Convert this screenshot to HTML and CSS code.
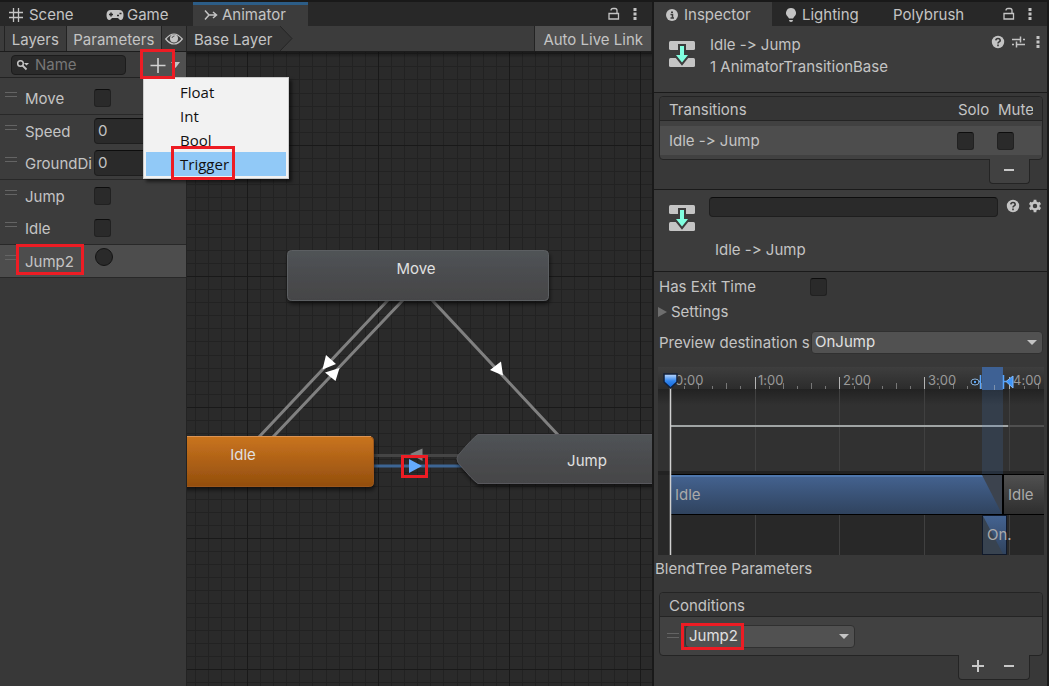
FILE: index.html
```html
<!DOCTYPE html>
<html lang="en">
<head>
<meta charset="utf-8">
<title>Animator</title>
<link rel="stylesheet" href="styles.css">
</head>
<body>
<svg class="defs" aria-hidden="true">
  <symbol id="lock" viewBox="0 0 12 14"><path d="M1 6.5h9.5v5.5H1zM3 3.5q0-2 2-2h2q2 0 2 2v3" fill="none" stroke="#c4c4c4" stroke-width="1.3"/></symbol>
  <symbol id="dots" viewBox="0 0 4 14"><path d="M.5 1h3v3h-3zM.5 5.5h3v3h-3zM.5 10h3v3h-3z" fill="#c4c4c4"/></symbol>
  <symbol id="help" viewBox="0 0 14 14"><circle cx="7" cy="7" r="6.2" fill="#c4c4c4"/><path d="M4.8 5.4q.2-1.9 2.2-1.9t2.2 1.7q0 1.1-1.1 1.7T7 8.6M7 9.6v1.6" fill="none" stroke="#383838" stroke-width="1.6"/></symbol>
  <symbol id="transition" viewBox="0 0 28 28"><rect x="1" y="1" width="26" height="9" rx="1.5" fill="#c4c4c4"/><rect x="1" y="18" width="26" height="9" rx="1.5" fill="#c4c4c4"/><path d="M12 6h4v9h4L14 22.500 8 15h4z" fill="#80ffe0" stroke="#3c3c3c" stroke-width="4" paint-order="stroke"/></symbol>
  <symbol id="grip" viewBox="0 0 12 6"><path d="M0 .5h12M0 4.500h12" stroke="#646464"/></symbol>
</svg>
<div class="editor">
  <section class="animator">
    <nav class="tabs">
      <button class="tab tab-scene"><svg width="14" height="14" viewBox="0 0 14 14"><path d="M4.500 0v14M9.500 0v14M0 4.500h14M0 9.500h14" stroke="#c4c4c4" stroke-width="1.300"/></svg>Scene</button>
      <button class="tab tab-game"><svg width="18" height="12" viewBox="0 0 18 12"><path d="M5 1h8q4.500 0 4.500 5t-3 5q-1 0-2.500-2H6Q4.500 11 3.500 11 .5 11 .5 6T5 1z" fill="#c4c4c4"/><path d="M5 3.500v4M3 5.500h4M11 6.500h2M13.500 4.500h2" stroke="#282828" stroke-width="1.500"/></svg>Game</button>
      <button class="tab tab-animator active"><svg width="14" height="12" viewBox="0 0 14 12"><path d="M1 1.500L5 6h7M1 10.500L5 6M9 3l3.500 3L9 9" fill="none" stroke="#c4c4c4" stroke-width="1.500"/></svg>Animator</button>
      <span class="tab-tools"><svg width="12" height="14"><use href="#lock"/></svg><svg width="4" height="14"><use href="#dots"/></svg></span>
    </nav>
    <div class="toolbar">
      <div class="toolbar-side">
        <button class="tool">Layers</button><button class="tool pressed">Parameters</button>
        <button class="tool eye" aria-label="Hide"><svg width="18" height="12" viewBox="0 0 18 12"><path d="M.7 6Q9-4 17.300 6 9 16 .7 6z" fill="none" stroke="#c4c4c4" stroke-width="1.200"/><circle cx="9" cy="5.500" r="4" fill="#c4c4c4"/><path d="M7 5q.3-2 2.500-2" stroke="#505050" fill="none"/></svg></button>
      </div>
      <div class="crumb"><span>Base Layer</span><svg width="13" height="25" viewBox="0 0 13 25"><path d="M0 0l12 12.500L0 25z" fill="#353535"/><path d="M0 0l12 12.500L0 25" fill="none" stroke="#262626"/></svg></div>
      <button class="tool live">Auto Live Link</button>
    </div>
    <div class="workspace">
      <aside class="parameters">
        <div class="filter">
          <label class="search"><svg width="14" height="12" viewBox="0 0 14 12"><circle cx="4.500" cy="4.500" r="2.800" fill="none" stroke="#c4c4c4" stroke-width="1.500"/><path d="M6.500 6.500l4 4" stroke="#c4c4c4" stroke-width="1.800"/><path d="M8 4h5l-2.500 2.500z" fill="#c4c4c4"/></svg><input type="text" placeholder="Name" aria-label="Name"></label>
          <button class="add" aria-label="Add parameter"><svg width="30" height="16" viewBox="0 0 30 16"><path d="M8 1v15M.5 8.500h15" stroke="#d2d2d2" stroke-width="1.600"/><path d="M21 5h9l-4.500 6z" fill="#c4c4c4"/></svg></button>
          <div class="menu" role="menu">
            <button role="menuitem">Float</button><button role="menuitem">Int</button><button role="menuitem">Bool</button><button role="menuitem" class="hover"><span class="mark mark-trigger"></span>Trigger</button>
          </div>
          <span class="mark mark-add"></span>
        </div>
        <div class="params">
          <div class="param ruled"><svg class="grip"><use href="#grip"/></svg><label for="p1">Move</label><input id="p1" type="checkbox"></div>
          <div class="param"><svg class="grip"><use href="#grip"/></svg><label for="p2">Speed</label><input id="p2" type="text" value="0"></div>
          <div class="param ruled"><svg class="grip"><use href="#grip"/></svg><label for="p3">GroundDi</label><input id="p3" type="text" value="0"></div>
          <div class="param"><svg class="grip"><use href="#grip"/></svg><label for="p4">Jump</label><input id="p4" type="checkbox"></div>
          <div class="param ruled"><svg class="grip"><use href="#grip"/></svg><label for="p5">Idle</label><input id="p5" type="checkbox"></div>
          <div class="param ruled selected"><svg class="grip"><use href="#grip"/></svg><label for="p6">Jump2</label><input id="p6" type="radio"><span class="mark mark-param"></span></div>
        </div>
      </aside>
      <div class="graph">
        <svg class="graph-art" width="100%" height="100%">
          <defs>
            <pattern id="grid" x="60" y="93" width="131" height="131" patternUnits="userSpaceOnUse">
              <path d="M13.500 0v131M26.500 0v131M39.500 0v131M52.500 0v131M65.500 0v131M79.500 0v131M92.500 0v131M105.500 0v131M118.500 0v131M0 13.500h131M0 26.500h131M0 39.500h131M0 52.500h131M0 65.500h131M0 79.500h131M0 92.500h131M0 105.500h131M0 118.500h131" stroke="#222222"/>
              <path d="M.5 0v131M0 .5h131" stroke="#191919"/>
            </pattern>
            <linearGradient id="slate" x2="0" y2="1"><stop stop-color="#505356"/><stop offset="1" stop-color="#454547"/></linearGradient>
            <linearGradient id="orange" x2="0" y2="1"><stop stop-color="#c9741f"/><stop offset="1" stop-color="#934e0d"/></linearGradient>
            <linearGradient id="topshade" x2="0" y2="1"><stop stop-color="#000" stop-opacity=".4"/><stop offset="1" stop-color="#000" stop-opacity="0"/></linearGradient>
            <filter id="drop" x="-10%" y="-20%" width="120%" height="150%"><feDropShadow dx="1" dy="3" stdDeviation="2" flood-opacity=".6"/></filter>
          </defs>
          <rect width="100%" height="100%" fill="url(#grid)"/>
          <rect width="100%" height="6" fill="url(#topshade)"/>
          <g transform="translate(-187 -52)">
            <path d="M388 300L259 437M403 300L273 437M432 300L559 436" stroke="#808080" stroke-width="3"/>
            <path d="M372 455.500h90" stroke="#454545" stroke-width="3"/><path d="M372 466h92" stroke="#3d6593" stroke-width="3"/>
            <path d="M326 355l10 9-13.500 5.500zM325 372.500l14.500-4.500-4 13zM501 361.500l-11 8.500 13 5.500z" fill="#fff"/>
            <path d="M410 454l12.500-5.500V461z" fill="#808080"/><path d="M409 459v14l13-7z" fill="#64aaff"/>
            <g filter="url(#drop)"><rect x="287.500" y="250.500" width="261" height="50" rx="4" fill="url(#slate)" stroke="#5c5f62"/></g>
            <g filter="url(#drop)"><rect x="120.500" y="436.500" width="253" height="50" rx="4" fill="url(#orange)" stroke="#9c571a"/></g><path d="M187 436.500h184" stroke="#db9454"/>
            <g filter="url(#drop)"><path d="M478 434.500h400v49H478q-5-3-20-21-2-4 0-7 15-18 20-21z" fill="url(#slate)" stroke="#58595d"/></g>
            <g class="node-names"><text x="416" y="274">Move</text><text x="243" y="460">Idle</text><text x="587" y="466">Jump</text></g>
          </g>
        </svg>
        <span class="mark mark-arrow"></span>
      </div>
    </div>
  </section>

  <section class="inspector">
    <nav class="tabs">
      <button class="tab tab-inspector current"><svg width="12" height="12" viewBox="0 0 12 12"><circle cx="6" cy="6" r="6" fill="#c4c4c4"/><path d="M4.500 5.500h2v3.500M4.500 9h3.500M5 3.200h2" stroke="#3c3c3c" stroke-width="1.500" fill="none"/></svg>Inspector</button>
      <button class="tab tab-lighting"><svg width="12" height="14" viewBox="0 0 12 14"><path d="M6 0a5 5 0 0 1 3 9l-1 1.500H4L3 9a5 5 0 0 1 3-9zM4 12h4q0 2-2 2t-2-2z" fill="#c4c4c4"/></svg>Lighting</button>
      <button class="tab tab-poly">Polybrush</button>
      <span class="tab-tools"><svg width="12" height="14"><use href="#lock"/></svg><svg width="4" height="14"><use href="#dots"/></svg></span>
    </nav>
    <header class="summary">
      <svg width="28" height="28"><use href="#transition"/></svg>
      <div class="summary-text"><div>Idle -&gt; Jump</div><div>1 AnimatorTransitionBase</div></div>
      <div class="summary-tools"><svg width="14" height="14"><use href="#help"/></svg><svg class="presets" width="14" height="14" viewBox="0 0 14 14"><path d="M1 4.500h8M12 4.500h2M1 9.500h2M6 9.500h8M9.500 1.500v6M5.500 6.500v6" stroke="#c4c4c4" stroke-width="1.500"/></svg><svg width="4" height="14"><use href="#dots"/></svg></div>
    </header>
    <div class="transitions">
      <div class="box">
        <div class="box-head"><span class="grow">Transitions</span><span class="col">Solo</span><span class="col mute">Mute</span></div>
        <div class="box-row"><span class="grow">Idle -&gt; Jump</span><input class="col-check" type="checkbox" aria-label="Solo"><input class="col-check" type="checkbox" aria-label="Mute"></div>
      </div>
      <div class="box-foot"><button aria-label="Remove transition"><svg width="12" height="12"><path d="M1 6h10" stroke="#c8c8c8" stroke-width="2"/></svg></button></div>
    </div>
    <div class="detail">
      <svg width="28" height="28"><use href="#transition"/></svg>
      <div class="detail-main"><input type="text" aria-label="Transition name"><span>Idle -&gt; Jump</span></div>
      <div class="detail-tools"><svg width="14" height="14"><use href="#help"/></svg><svg width="14" height="14" viewBox="0 0 14 14"><circle cx="7" cy="7" r="3.500" fill="none" stroke="#c4c4c4" stroke-width="2.500"/><path d="M7 .8v2.500M7 10.700v2.500M1.600 3.900l2.200 1.200M10.200 8.900l2.200 1.200M1.600 10.100l2.200-1.200M10.200 5.100l2.200-1.200" stroke="#c4c4c4" stroke-width="2.800"/></svg></div>
    </div>
    <div class="settings">
      <div class="field"><label for="exit">Has Exit Time</label><input id="exit" type="checkbox"></div>
      <button class="fold"><svg width="10" height="12"><path d="M0 1v10l9-5z" fill="#6e6e6e"/></svg>Settings</button>
      <div class="field preview"><label for="dest">Preview destination s</label><span class="select"><select id="dest"><option>OnJump</option></select></span></div>
    </div>
    <div class="timeline">
      <svg width="100%" height="188">
        <defs>
          <linearGradient id="ruler" x2="0" y2="1"><stop stop-color="#3e3e3e"/><stop offset="1" stop-color="#2c2c2c"/></linearGradient>
          <linearGradient id="clip" x2="0" y2="1"><stop stop-color="#446391"/><stop offset="1" stop-color="#30435e"/></linearGradient>
          <linearGradient id="clip2" x2="0" y2="1"><stop stop-color="#505050"/><stop offset="1" stop-color="#2e2e2e"/></linearGradient>
          <linearGradient id="thumb" x2="0" y2="1"><stop stop-color="#c3dcff"/><stop offset=".5" stop-color="#3286ee"/><stop offset="1" stop-color="#0d63d8"/></linearGradient>
          <pattern id="ticks" x="12" y="0" width="85" height="22" patternUnits="userSpaceOnUse"><path d="M14.500 19v3M42.500 19v3M70.500 19v3M28.500 16v6M56.500 16v6" stroke="#777"/></pattern>
          <linearGradient id="shade" x2="0" y2="1"><stop stop-color="#222"/><stop offset="1" stop-color="#313131"/></linearGradient>
        </defs>
        <rect width="100%" height="188" fill="#282828"/>
        <rect width="100%" height="22" fill="url(#ruler)"/>
        <rect y="22" width="100%" height="83" fill="#313131"/><rect y="22" width="100%" height="16" fill="url(#shade)"/>
        <path d="M97.500 22v166M181.500 22v166M266.500 22v166M351.500 22v166" stroke="#404040"/>
        <rect x="12" width="100%" height="22" fill="url(#ticks)"/>
        <path d="M97.500 10v12M181.500 10v12M266.500 10v12M351.500 10v12" stroke="#b4b4b4"/>
        <g class="ruler-text"><text x="17" y="18">0:00</text><text x="100" y="18">1:00</text><text x="185" y="18">2:00</text><text x="270" y="18">3:00</text><text x="355" y="18">4:00</text></g>
        <rect x="12" y="58" width="100%" height="2" fill="#505050"/><rect x="12" y="58" width="338" height="2" fill="#a0a4a4"/>
        <rect y="104" width="100%" height="4" fill="#222"/>
        <rect x="12" y="107" width="100%" height="41" fill="#000"/>
        <rect x="13" y="108" width="331" height="39" fill="url(#clip)"/><rect x="13" y="108" width="331" height="2" fill="#4e76ab"/>
        <path d="M324 108h20v39z" fill="#3c434e"/>
        <rect x="346" y="108" width="100%" height="39" fill="url(#clip2)"/>
        <rect x="324" y="148" width="25" height="40" fill="#10192a"/>
        <rect x="325" y="149" width="23" height="38" fill="url(#clip)"/><path d="M325 149l20 38h-20z" fill="#384350"/>
        <rect x="324" y="22" width="21" height="85" fill="#4078c0" fill-opacity=".18"/><rect x="324" width="21" height="23" fill="#3e6194"/><path d="M336.500 18v5" stroke="#7c91ad"/>
        <path d="M322.500 8v14M318 14.500h4M345.500 8v14M345 14.500h3" stroke="#58a6ff" stroke-width="1.500"/>
        <ellipse cx="317" cy="15" rx="4" ry="3" fill="#202020" stroke="#8cb5df"/><circle cx="317" cy="15" r="1.200" fill="#58a6ff"/>
        <path d="M355 9v12l-7-6.500z" fill="#3f95f8" stroke="#80baff"/>
        <path d="M12.500 20v168" stroke="#d0d0d0" stroke-width="1.500"/>
        <path d="M6 7h13v8l-6.500 6L6 15z" fill="url(#thumb)" stroke="#12203a" stroke-width="1.500"/>
        <g class="clip-text"><text x="17" y="133">Idle</text><text x="350" y="133">Idle</text><text x="329" y="173">On.</text></g>
      </svg>
    </div>
    <div class="blend">BlendTree Parameters</div>
    <div class="conditions">
      <div class="box">
        <div class="box-head">Conditions</div>
        <div class="condition"><svg class="grip"><use href="#grip"/></svg><span class="select"><select aria-label="Condition parameter"><option>Jump2</option></select><span class="mark mark-condition"></span></span></div>
      </div>
      <div class="box-foot"><button aria-label="Add condition"><svg width="12" height="12"><path d="M6 0v12M0 6h12" stroke="#c8c8c8" stroke-width="2"/></svg></button><button aria-label="Remove condition"><svg width="12" height="12"><path d="M1 6h10" stroke="#c8c8c8" stroke-width="2"/></svg></button></div>
    </div>
  </section>
</div>
</body>
</html>
```

FILE: styles.css
```css
* { box-sizing: border-box; }
body { margin: 0; background: #191919; color: #c4c4c4; font: 15px/20px Inter, "Liberation Sans", sans-serif; font-feature-settings: "calt" 0; }
svg { display: block; flex: none; }
.defs { position: absolute; width: 0; height: 0; }
button, input, select { font: inherit; color: inherit; margin: 0; }
button { border: 0; padding: 0; background: none; white-space: nowrap; }

.editor { display: grid; grid-template-columns: minmax(0, 1fr) 393px; gap: 2px; min-height: 100vh; padding: 2px 2px 0 0; }
.animator, .inspector { display: flex; flex-direction: column; min-width: 0; background: #383838; }

.tabs { display: flex; height: 24px; background: #282828; }
.tab { display: flex; align-items: center; gap: 6px; padding-top: 2px; }
.tab.active { background: #3c3c3c; border-top: 3px solid #2c5d87; padding: 0 0 2px 11px; }
.tab.current { background: #3c3c3c; }
.tab-scene { width: 97px; padding-left: 9px; }
.tab-game { width: 96px; padding-left: 9px; gap: 3px; }
.tab-animator { width: 115px; gap: 4px; }
.tab-inspector { width: 118px; padding-left: 12px; }
.tab-lighting { width: 107px; padding-left: 13px; gap: 5px; }
.tab-poly { padding-left: 14px; }
.tab-tools { display: flex; gap: 13px; align-items: center; margin-left: auto; padding-right: 15px; }

.toolbar { display: flex; height: 26px; background: #3c3c3c; border-bottom: 1px solid #1c1c1c; }
.toolbar-side { display: flex; width: 187px; padding-left: 4px; border-right: 1px solid #232323; }
.tool { border-left: 1px solid #232323; padding: 2px 5px 0; }
.toolbar-side .tool { flex: 1 0 auto; }
.tool.pressed, .tool.live { background: #505050; }
.toolbar-side .eye { display: flex; flex: 0 0 25px; padding: 0; align-items: center; justify-content: center; }
.crumb { display: flex; align-items: center; background: #353535; padding-left: 7px; gap: 8px; }
.crumb span { padding-top: 2px; }
.crumb svg { margin-right: -13px; }
.tool.live { margin-left: auto; padding: 2px 8px 0; border-right: 1px solid #232323; }

.workspace { display: flex; flex: 1; }
.parameters { width: 187px; border-right: 1px solid #232323; background: #383838; }
.filter { position: relative; display: flex; height: 26px; background: #3c3c3c; border-bottom: 1px solid #232323; padding: 0 0 0 11px; justify-content: space-between; align-items: center; }
.search { display: flex; width: 115px; height: 20px; align-items: center; gap: 5px; padding-left: 4px; background: #2a2a2a; border: 1px solid #1c1c1c; border-radius: 4px; }
.add { align-self: stretch; width: 43px; padding-left: 7px; background: #505050; }

.menu { position: absolute; z-index: 3; left: 143px; top: 25px; width: 146px; padding: 2px; background: #f2f2f2; border: 1px solid #ccc; box-shadow: 3px 3px 3px rgba(0, 0, 0, .5); color: #111; font: 15px/24px "Open Sans", "Noto Sans", sans-serif; }
.menu button { display: block; position: relative; width: 100%; padding-left: 34px; text-align: left; }
.menu .hover { background: #91c9f7; }

.mark { position: absolute; z-index: 4; border: 3px solid #ed1c24; pointer-events: none; }
.mark-add { left: 140px; top: -3px; width: 35px; height: 30px; }
.mark-trigger { left: 25px; top: -6px; width: 64px; height: 34px; }
.mark-param { left: 16px; top: -1px; width: 68px; height: 31px; }
.mark-arrow { left: 214px; top: 403px; width: 27px; height: 23px; }
.mark-condition { left: -4px; top: -2px; width: 63px; height: 27px; }

.params { padding-top: 4px; background: #3c3c3c; }
.param { position: relative; display: flex; align-items: center; height: 32px; padding-left: 5px; }
.param.ruled { height: 33px; border-bottom: 1px solid #282828; }
.param.selected { background: #4d4d4d; }
.grip { width: 12px; height: 6px; margin-bottom: 6px; }
.param label { width: 67px; margin: 0 2px 0 8px; padding-top: 2px; }
input[type=text] { background: #2a2a2a; border: 1px solid #1e1e1e; border-top-color: #0d0d0d; border-radius: 4px; outline: 0; }
.param input[type=text] { width: 88px; height: 26px; padding: 0 3px 2px; }
.search input[type=text] { width: 80px; padding: 0; border: 0; background: none; }
.search input::placeholder { color: #777; opacity: 1; }
input[type=checkbox], input[type=radio] { appearance: none; flex: none; width: 17px; height: 18px; background: #2a2a2a; border: 1px solid #212121; border-top-color: #0d0d0d; border-radius: 3px; }
input[type=radio] { width: 18px; border-color: #141414; border-radius: 50%; margin: 0 0 8px 1px; }

.graph { position: relative; flex: 1; min-width: 0; overflow: hidden; background: #2a2a2a; }
.graph-art { position: absolute; inset: 0; }
.node-names { fill: #e0e0e0; text-anchor: middle; }

.summary { display: flex; height: 67px; padding: 8px 7px 0 14px; gap: 14px; background: #3c3c3c; border-bottom: 1px solid #1a1a1a; }
.summary > svg { margin-top: 6px; }
.summary-text { line-height: 22px; }
.summary-tools { display: flex; gap: 6px; margin-left: auto; padding-top: 1px; }
.summary-tools .presets { margin-right: 5px; }
.transitions { padding: 3px 4px 5px 5px; border-bottom: 1px solid #1a1a1a; }
.box { border: 1px solid #242424; border-radius: 4px; background: #414141; }
.box-head { display: flex; height: 24px; padding: 3px 9px 0; background: #353535; border-bottom: 1px solid #242424; border-radius: 4px 4px 0 0; }
.grow { flex: 1; }
.col { width: 40px; }
.col.mute { width: 35px; overflow: hidden; }
.box-row { display: flex; align-items: center; height: 29px; margin: 5px 1px 4px 0; padding: 0 27px 0 9px; gap: 23px; background: #4d4d4d; }
.box-foot { display: flex; justify-content: space-around; width: max-content; height: 25px; margin: -1px 13px 0 auto; position: relative; padding: 0 5px 2px 3px; background: #414141; border: 1px solid #242424; border-top: 0; border-radius: 0 0 4px 4px; }
.box-foot button { display: flex; width: 31px; align-items: center; justify-content: center; }

.detail { display: flex; height: 82px; padding: 7px 5px 0 14px; background: #3c3c3c; border-bottom: 1px solid #1a1a1a; }
.detail > svg { margin-top: 7px; }
.detail-main { display: flex; flex-direction: column; flex: 1; gap: 23px; margin: 0 8px 0 13px; }
.detail-main input { width: 100%; height: 20px; }
.detail-main span { padding-left: 6px; }
.detail-tools { display: flex; gap: 8px; padding-top: 2px; }

.settings { padding: 5px 4px 0 5px; }
.field { display: flex; align-items: center; height: 20px; }
.field label { flex: none; width: 151px; white-space: nowrap; }
.fold { display: flex; align-items: center; height: 20px; margin: 5px 0 9px -1px; gap: 3px; }
.preview { height: 23px; }
.select { position: relative; display: block; flex: 1; margin-left: 1px; }
.select::after { content: ""; position: absolute; right: 6px; top: 9px; border: 5px solid transparent; border-top-color: #c4c4c4; border-bottom: 0; pointer-events: none; }
select { appearance: none; display: block; width: 100%; height: 23px; padding: 0 3px 2px; background: #515151; border: 1px solid #303030; border-radius: 4px; color: #e0e0e0; }
.timeline { margin: 13px 3px 0 4px; }
.ruler-text { font-size: 13px; fill: #999; }
.clip-text { fill: #aaa; }
.blend { padding: 4px 1px 0; }
.conditions { padding: 13px 4px 0 5px; }
.condition { display: flex; align-items: center; height: 38px; padding-left: 7px; }
.condition .grip { margin-bottom: 0; }
.condition .select { flex: 0 0 170px; margin-left: 6px; }
```
